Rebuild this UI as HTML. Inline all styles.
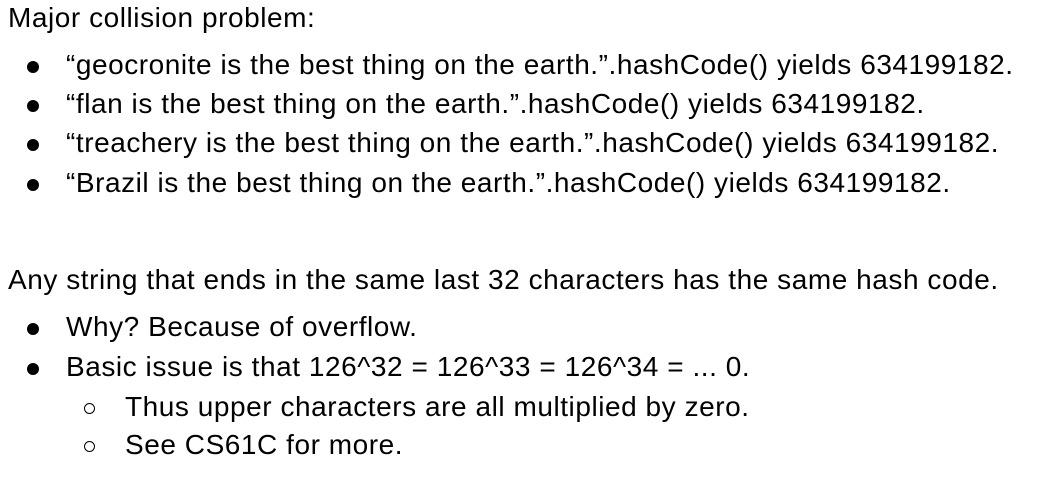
<!DOCTYPE html>
<html><head><meta charset="utf-8"><style>
body{margin:0;width:1044px;height:492px;background:#fff;position:relative;overflow:hidden;font-family:"Liberation Sans",sans-serif;font-size:28px;color:#000}
.l{position:absolute;white-space:nowrap;line-height:30px;letter-spacing:0.55px}
.b{position:absolute;width:12px;height:12px;border-radius:50%;background:#000}
.c{position:absolute;width:9px;height:9px;border-radius:50%;border:1.5px solid #000}
</style></head><body>
<div class="l" style="left:8px;top:3px">Major collision problem:</div>
<div class="b" style="left:27px;top:61px"></div><div class="l" style="left:66px;top:50px">“geocronite is the best thing on the earth.”.hashCode() yields 634199182.</div>
<div class="b" style="left:27px;top:100px"></div><div class="l" style="left:66px;top:89px">“flan is the best thing on the earth.”.hashCode() yields 634199182.</div>
<div class="b" style="left:27px;top:139px"></div><div class="l" style="left:66px;top:128px">“treachery is the best thing on the earth.”.hashCode() yields 634199182.</div>
<div class="b" style="left:27px;top:179px"></div><div class="l" style="left:66px;top:168px">“Brazil is the best thing on the earth.”.hashCode() yields 634199182.</div>
<div class="l" style="left:8px;top:265px">Any string that ends in the same last 32 characters has the same hash code.</div>
<div class="b" style="left:27px;top:323px"></div><div class="l" style="left:66px;top:312px">Why? Because of overflow.</div>
<div class="b" style="left:27px;top:363px"></div><div class="l" style="left:66px;top:352px">Basic issue is that 126^32 = 126^33 = 126^34 = ... 0.</div>
<div class="c" style="left:84px;top:403px"></div><div class="l" style="left:125px;top:392px">Thus upper characters are all multiplied by zero.</div>
<div class="c" style="left:84px;top:441px"></div><div class="l" style="left:125px;top:430px">See CS61C for more.</div>
</body></html>
